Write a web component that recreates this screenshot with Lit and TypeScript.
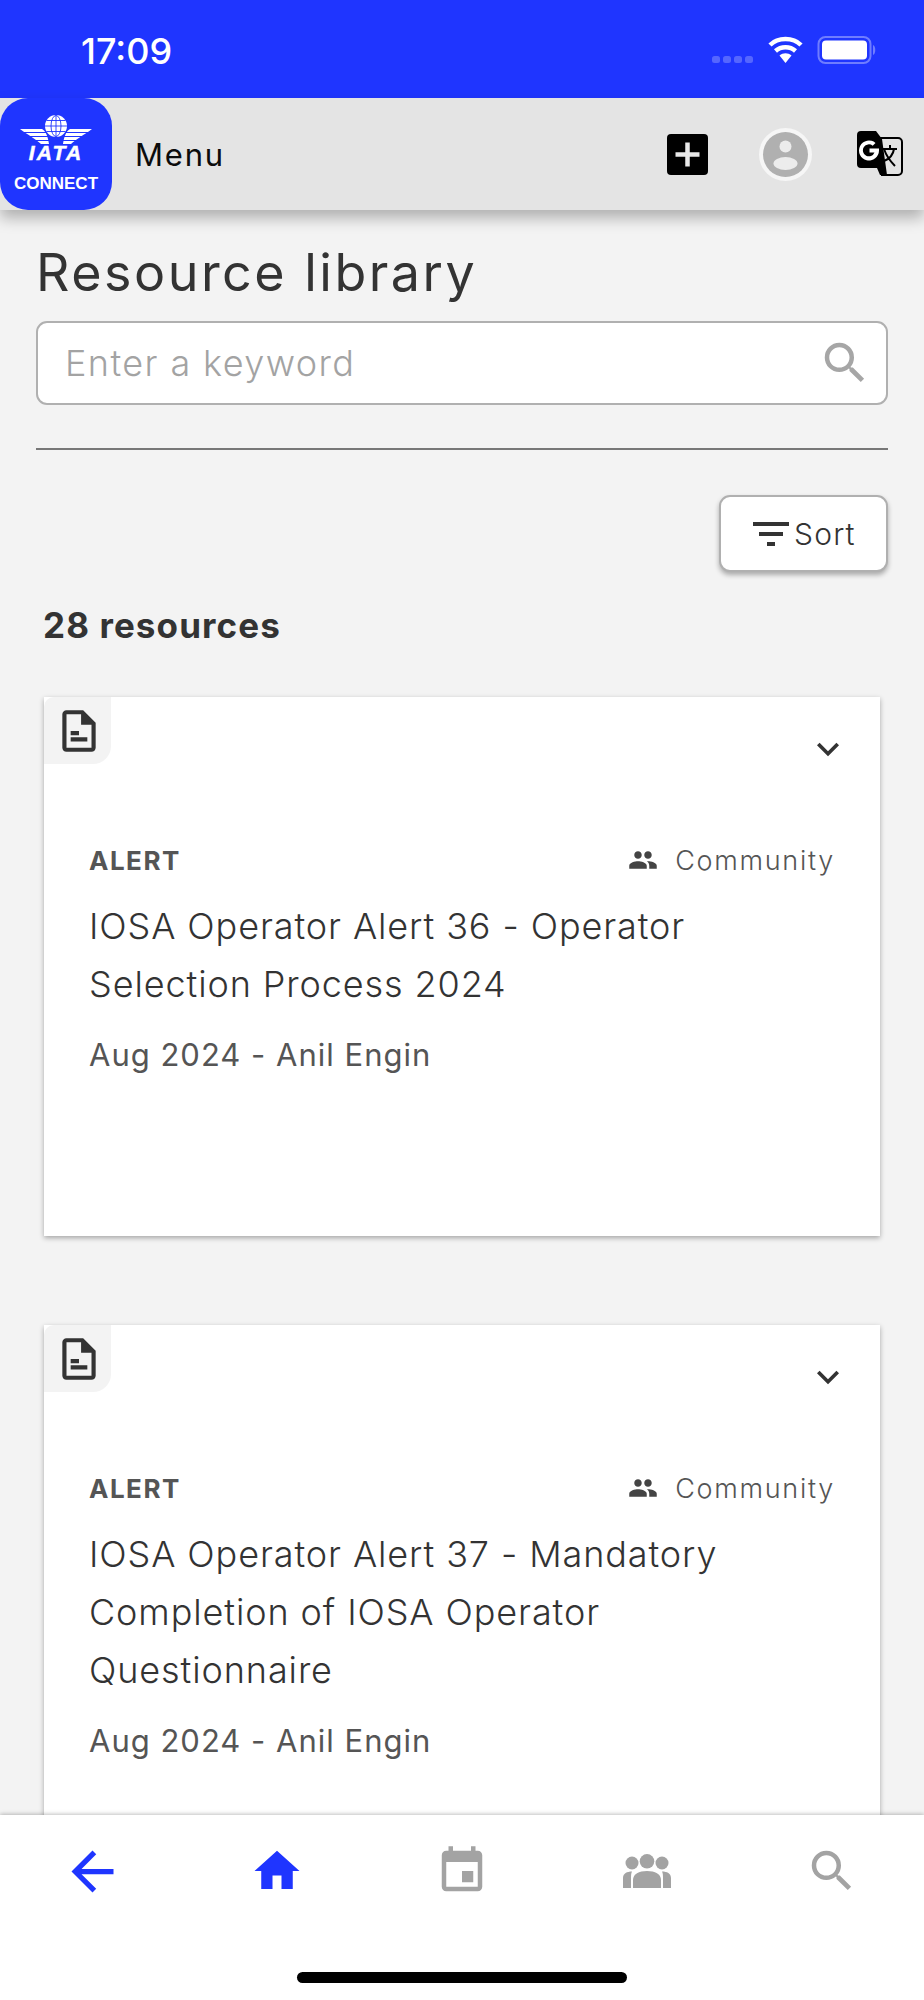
import { LitElement, html, css } from "lit";
import { customElement } from "lit/decorators.js";

const BLUE = "#1f35ff";

const docIcon = html`<svg class="doc" viewBox="0 0 24 24" width="50" height="50" fill="#333"><path d="M14 2H6c-1.100 0-2 .9-2 2v16c0 1.100.9 2 2 2h12c1.100 0 2-.9 2-2V8l-6-6zm4 18H6V4h7v5h5v11zM8 15h8v2H8zm0-3h4v2H8z"/></svg>`;

const cards = [
  { title: ["IOSA Operator Alert 36 - Operator", "Selection Process 2024"], h: 539 },
  { title: ["IOSA Operator Alert 37 - Mandatory", "Completion of IOSA Operator", "Questionnaire"], h: 600 },
];

@customElement("app-root")
export class AppRoot extends LitElement {
  static styles = css`
    :host { display: flex; flex-direction: column; width: 924px; height: 2000px; overflow: hidden; background: #f3f3f3; font-family: "Inter", "Liberation Sans", sans-serif; color: #333; }
    .status { height: 98px; flex: none; background: #1f35ff; display: flex; align-items: center; color: #fff; box-sizing: border-box; padding: 0 0 0 81px; }
    .time { font: 500 36px/1 "Inter", sans-serif; margin-top: 3px; }
    .sysicons { margin-left: auto; margin-right: 46px; display: flex; align-items: center; }
    .sysicons svg { display: block; }
    .header { height: 112px; flex: none; background: #e4e4e4; display: flex; align-items: center; box-shadow: 0 8px 14px rgba(0,0,0,.28); position: relative; z-index: 2; }
    .logo { width: 112px; height: 112px; background: #1f35ff; border-radius: 28px; flex: none; display: flex; flex-direction: column; align-items: center; color: #fff; box-sizing: border-box; padding-top: 17px; }
    .logo svg { display: block; }
    .iata { font: italic 700 21px/1 "Liberation Sans", sans-serif; letter-spacing: 2.200px; margin-top: -4px; -webkit-text-stroke: .5px #fff; }
    .connect { font: 700 17px/1 "Liberation Sans", sans-serif; margin-top: 12px; }
    .menu { font-size: 31px; color: #0c0c0c; margin-left: 23px; letter-spacing: 1.800px; }
    .actions { margin-left: auto; display: flex; align-items: center; }
    .plus { width: 41px; height: 41px; background: #000; border-radius: 4px; display: flex; }
    .avatar { width: 53px; height: 53px; margin-left: 51px; }
    .translate { margin-left: 45px; margin-right: 21px; width: 46px; height: 46px; display: block; }
    main { flex: 1; min-height: 0; overflow: hidden; padding: 0 36px; display: flex; flex-direction: column; }
    h1 { margin: 30px 0 0; font-size: 52px; line-height: 66px; font-weight: 400; color: #333; letter-spacing: 2.500px; flex: none; }
    .search { height: 84px; flex: none; margin-top: 15px; box-sizing: border-box; border: 2px solid #b0b0b0; border-radius: 11px; background: #fff; display: flex; align-items: center; padding: 0 14px 0 27px; }
    .ph { font-size: 36px; font-weight: 300; color: #a3a3a3; letter-spacing: 1.400px; }
    .search svg { margin-left: auto; }
    hr { flex: none; border: 0; height: 2px; background: #777; margin: 43px 0 0; }
    .sort-row { display: flex; justify-content: flex-end; margin-top: 45px; flex: none; }
    .sort { width: 169px; height: 77px; box-sizing: border-box; border: 2px solid #b0b0b0; border-radius: 11px; background: #fff; display: flex; align-items: center; padding-left: 26px; box-shadow: 0 3px 5px rgba(0,0,0,.3); font-size: 30px; color: #333; font-weight: 300; letter-spacing: 1.200px; }
    .sort svg { margin-right: -1px; }
    .count { font-size: 35px; font-weight: 700; margin: 31px 0 0 7px; line-height: 44px; color: #333; letter-spacing: 1.100px; flex: none; }
    .card { position: relative; flex: none; margin: 0 8px; background: #fff; box-shadow: 0 2px 5px rgba(0,0,0,.32); box-sizing: border-box; padding: 145px 45px 0; }
    .card.first { margin-top: 50px; }
    .card + .card { margin-top: 89px; }
    .tab { position: absolute; left: 0; top: 0; width: 67px; height: 67px; background: #f3f3f3; border-radius: 10px 0 18px 0; display: flex; align-items: center; justify-content: center; padding-left: 3px; box-sizing: border-box; }
    .chev { position: absolute; right: 30px; top: 30px; display: block; }
    .meta { display: flex; align-items: center; justify-content: space-between; height: 36px; }
    .type { font-size: 26px; font-weight: 700; color: #555; letter-spacing: 1.500px; }
    .scope { display: flex; align-items: center; font-size: 27px; font-weight: 300; color: #555; letter-spacing: 1.700px; }
    .scope svg { margin-right: 17px; }
    .title { font-size: 36px; line-height: 58px; font-weight: 300; color: #333; margin-top: 19px; letter-spacing: .9px; }
    .by { font-size: 31px; color: #555; font-weight: 400; margin-top: 22px; line-height: 40px; letter-spacing: 1px; }
    nav { height: 185px; flex: none; background: #fff; position: relative; z-index: 2; box-shadow: 0 -1px 4px rgba(0,0,0,.25); display: flex; box-sizing: border-box; padding: 29px 0 0 0; }
    nav .it { width: 184.800px; height: 54px; display: flex; justify-content: center; align-items: center; }
    .home { position: absolute; left: 297px; bottom: 17px; width: 330px; height: 11px; border-radius: 6px; background: #000; }
  `;

  render() {
    return html`
      <div class="status">
        <div class="time">17:09</div>
        <div class="sysicons">
          <svg width="166" height="30" viewBox="0 0 166 30">
            <g fill="#5566ff"><rect x="0" y="22" width="8" height="7" rx="2.500"/><rect x="11" y="22" width="8" height="7" rx="2.500"/><rect x="22" y="22" width="8" height="7" rx="2.500"/><rect x="33" y="22" width="8" height="7" rx="2.500"/></g>
            <g fill="none" stroke="#fff" stroke-width="4.500"><path d="M58 11 C 66 3 81 3 89 11"/><path d="M63.500 17 C 69 12 78 12 83.500 17"/></g>
            <path d="M67.500 21.500 C 71 18.500 76 18.500 79.500 21.500 L73.500 29 Z" fill="#fff"/>
            <rect x="106.500" y="3" width="52" height="26" rx="7" fill="none" stroke="#6f7dff" stroke-width="2"/>
            <rect x="110" y="6.500" width="45" height="19" rx="4" fill="#fff"/>
            <path d="M161 11 c3 1 3 9 0 10 z" fill="#6f7dff"/>
          </svg>
        </div>
      </div>
      <div class="header">
        <div class="logo">
          <svg width="72" height="31" viewBox="0 0 72 31" fill="#fff">
            <circle cx="36" cy="11" r="11"/>
            <g fill="none" stroke="#1f35ff" stroke-width=".9"><ellipse cx="36" cy="11" rx="5" ry="10.500"/><path d="M36 0v22M25 11h22M26.500 5.500h19M26.500 16.500h19"/></g>
            <path d="M0 14H22C26 16 28 22 29 29H21C16 24 8 20 0 14ZM72 14H50C46 16 44 22 43 29H51C56 24 64 20 72 14Z"/>
            <path d="M3 17.500H27M69 17.500H45M9 21.500H28M63 21.500H44M15 25.500H29M57 25.500H43" stroke="#1f35ff" stroke-width="1.200"/>
          </svg>
          <div class="iata">IATA</div>
          <div class="connect">CONNECT</div>
        </div>
        <div class="menu">Menu</div>
        <div class="actions">
          <div class="plus"><svg width="41" height="41" viewBox="0 0 41 41"><path d="M8.500 20.500h24M20.500 8.500v24" stroke="#e8e8e8" stroke-width="4.500"/></svg></div>
          <svg class="avatar" viewBox="0 0 53 53">
            <circle cx="26.500" cy="26.500" r="26.500" fill="#f6f6f6"/><circle cx="26.500" cy="26.500" r="22.500" fill="#b0b0b0"/>
            <circle cx="26.500" cy="18.500" r="6" fill="#ececec"/><ellipse cx="26.500" cy="35.500" rx="12" ry="6.500" fill="#ececec"/>
          </svg>
          <svg class="translate" viewBox="0 0 46 46">
            <path d="M20 7h21a4 4 0 0 1 4 4v29a4 4 0 0 1-4 4H24" fill="#e4e4e4" stroke="#000" stroke-width="2"/>
            <path d="M4 0h15l6 8 5 36h-7l-3-7H4a4 4 0 0 1-4-4V4a4 4 0 0 1 4-4z" fill="#000"/>
            <path d="M22 17.500h-9.500v4h5a6 6 0 1 1-1.800-6.800l2.800-2.800a10 10 0 1 0 3.500 7.600z" fill="#fff"/>
            <path d="M26 18h14M33 14v4M37 18c-1 7-5 10-10 12M27 18c2 6 7 13 11 17" fill="none" stroke="#000" stroke-width="2"/>
          </svg>
        </div>
      </div>
      <main>
        <h1>Resource library</h1>
        <div class="search">
          <span class="ph">Enter a keyword</span>
          <svg width="54" height="54" viewBox="0 0 24 24" fill="#a6a6a6"><path d="M15.500 14h-.79l-.28-.27A6.470 6.470 0 0 0 16 9.500 6.500 6.500 0 1 0 9.500 16c1.610 0 3.090-.59 4.230-1.570l.27.280v.79l5 4.990L20.490 19l-4.990-5zm-6 0C7.010 14 5 11.990 5 9.500S7.010 5 9.500 5 14 7.010 14 9.500 11.990 14 9.500 14z"/></svg>
        </div>
        <hr />
        <div class="sort-row">
          <div class="sort">
            <svg width="48" height="48" viewBox="0 0 24 24" fill="#333"><path d="M10 18h4v-2h-4v2zM3 6v2h18V6H3zm3 7h12v-2H6v2z"/></svg>
            <span>Sort</span>
          </div>
        </div>
        <div class="count">28 resources</div>
        ${cards.map((c, i) => html`
          <div class="card ${i === 0 ? "first" : ""}" style="height:${c.h}px">
            <div class="tab">${docIcon}</div>
            <svg class="chev" width="44" height="44" viewBox="0 0 24 24" fill="#333"><path d="M7.410 8.590 12 13.170l4.590-4.580L18 10l-6 6-6-6z"/></svg>
            <div class="meta">
              <span class="type">ALERT</span>
              <span class="scope">
                <svg width="30" height="30" viewBox="0 0 24 24" fill="#444"><path d="M16 11c1.660 0 2.990-1.340 2.990-3S17.660 5 16 5s-3 1.340-3 3 1.340 3 3 3zm-8 0c1.660 0 2.990-1.340 2.990-3S9.660 5 8 5 5 6.340 5 8s1.340 3 3 3zm0 2c-2.330 0-7 1.170-7 3.500V19h14v-2.500c0-2.330-4.670-3.500-7-3.500zm8 0c-.29 0-.62.020-.97.050 1.160.84 1.970 1.970 1.970 3.450V19h6v-2.500c0-2.330-4.670-3.500-7-3.500z"/></svg>
                Community
              </span>
            </div>
            <div class="title">${c.title.map((t) => html`<div>${t}</div>`)}</div>
            <div class="by">Aug 2024 - Anil Engin</div>
          </div>
        `)}
      </main>
      <nav>
        <div class="it"><svg width="63" height="63" viewBox="0 0 24 24" fill="${BLUE}"><path d="M20 11H7.830l5.590-5.590L12 4l-8 8 8 8 1.410-1.410L7.830 13H20v-2z"/></svg></div>
        <div class="it"><svg width="54" height="54" viewBox="0 0 24 24" fill="${BLUE}"><path d="M10 20v-6h4v6h5v-8h3L12 3 2 12h3v8z"/></svg></div>
        <div class="it"><svg width="54" height="54" viewBox="0 0 24 24" fill="#a3a3a3"><path d="M17 12h-5v5h5v-5zM16 1v2H8V1H6v2H5c-1.110 0-1.990.9-1.990 2L3 19c0 1.100.89 2 2 2h14c1.100 0 2-.9 2-2V5c0-1.100-.9-2-2-2h-1V1h-2zm3 18H5V8h14v11z"/></svg></div>
        <div class="it"><svg width="48" height="34" viewBox="0 0 48 34" fill="#a3a3a3"><circle cx="24" cy="7.300" r="7.300"/><circle cx="9" cy="9" r="6.500"/><circle cx="39" cy="9" r="6.500"/><path d="M10 34V26C10 20 16 17 24 17S38 20 38 26V34Z"/><path d="M0 34V24C0 19.500 4 17.500 9 17.500C8 19 8 22 8 26V34Z"/><path d="M48 34V24C48 19.500 44 17.500 39 17.500C40 19 40 22 40 26V34Z"/></svg></div>
        <div class="it"><svg width="54" height="54" viewBox="0 0 24 24" fill="#a3a3a3"><path d="M15.500 14h-.79l-.28-.27A6.470 6.470 0 0 0 16 9.500 6.500 6.500 0 1 0 9.500 16c1.610 0 3.090-.59 4.230-1.570l.27.280v.79l5 4.990L20.490 19l-4.990-5zm-6 0C7.010 14 5 11.990 5 9.500S7.010 5 9.500 5 14 7.010 14 9.500 11.990 14 9.500 14z"/></svg></div>
        <div class="home"></div>
      </nav>
    `;
  }
}
